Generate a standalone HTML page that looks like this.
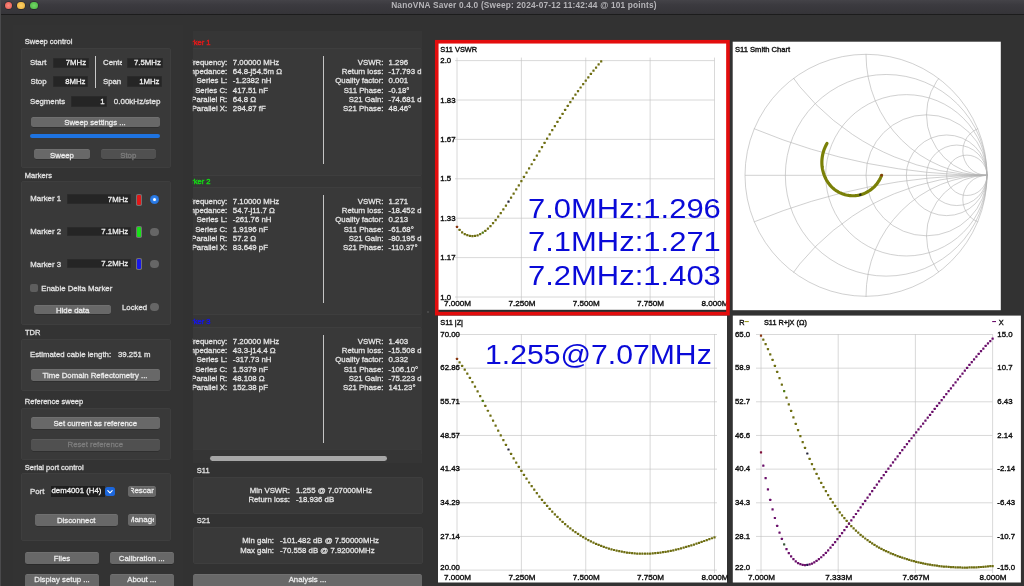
<!DOCTYPE html>
<html><head><meta charset="utf-8"><title>NanoVNA Saver</title>
<style>
html,body{margin:0;padding:0;overflow:hidden;}
body{width:1024px;height:586px;overflow:hidden;background:#323232;position:relative;
 font-family:"Liberation Sans",sans-serif;}
.t{position:absolute;white-space:nowrap;font-family:"Liberation Sans",sans-serif;-webkit-text-stroke:0.28px currentColor;}
.b{position:absolute;}
svg{position:absolute;left:0;top:0;}
svg text{stroke:#111;stroke-width:0.38px;}
.ui{position:absolute;left:0;top:0;width:1024px;height:586px;overflow:hidden;will-change:transform;}
</style></head><body><div class="ui">
<div class="b" style="left:0.00px;top:0.00px;width:1024.00px;height:14.00px;background:linear-gradient(#444348 0%,#3b3a3f 35%,#353438 100%);"></div>
<div class="b" style="left:0.00px;top:14.00px;width:1024.00px;height:0.80px;background:#1c1c1c;"></div>
<div class="b" style="left:4.90px;top:1.60px;width:7.60px;height:7.60px;background:radial-gradient(#fa8a80,#e4574c);border-radius:50%;box-shadow:0 0 0 0.7px rgba(0,0,0,.32);"></div>
<div class="b" style="left:17.45px;top:1.60px;width:7.60px;height:7.60px;background:radial-gradient(#fbd068,#e9ae38);border-radius:50%;box-shadow:0 0 0 0.7px rgba(0,0,0,.32);"></div>
<div class="b" style="left:30.00px;top:1.60px;width:7.60px;height:7.60px;background:radial-gradient(#74d868,#48b43e);border-radius:50%;box-shadow:0 0 0 0.7px rgba(0,0,0,.32);"></div>
<div class="t" style="top:0.02px;font-size:8.3px;line-height:10px;color:#b6b5b9;font-weight:bold;left:374.00px;width:300px;text-align:center;width:400px;left:324px;letter-spacing:0.19px;-webkit-text-stroke:0;">NanoVNA Saver 0.4.0 (Sweep: 2024-07-12 11:42:44 @ 101 points)</div>
<div class="b" style="left:0.00px;top:0.00px;width:1.20px;height:586.00px;background:#4a4a4c;"></div>
<div class="b" style="left:13.00px;top:25.00px;width:170.00px;height:561.00px;background:#333333;"></div>
<div class="b" style="left:192.80px;top:31.00px;width:229.20px;height:432.00px;background:#363636;"></div>
<div class="t" style="top:36.90px;font-size:7.5px;line-height:10px;color:#e4e4e4;left:24.80px;">Sweep control</div>
<div class="b" style="left:20.50px;top:47.80px;width:150.00px;height:120.20px;background:#393939;border-radius:3px;box-shadow:inset 0 0 0 0.5px rgba(255,255,255,.06);"></div>
<div class="t" style="top:58.20px;font-size:7.8px;line-height:10px;color:#e4e4e4;left:30.00px;">Start</div>
<div class="b" style="left:53.00px;top:57.50px;width:35.60px;height:10.50px;background:#252525;box-shadow:inset 0 0 0 0.5px rgba(255,255,255,.05);"></div>
<div class="t" style="top:58.20px;font-size:7.8px;line-height:10px;color:#f0f0f0;right:937.90px;text-align:right;">7MHz</div>
<div class="b" style="left:95.00px;top:56.00px;width:0.80px;height:31.50px;background:#c8c8c8;"></div>
<div class="b" style="left:103px;top:57px;width:18.5px;height:12px;overflow:hidden;">
<div class="t" style="left:0;top:1.20px;font-size:7.8px;line-height:10px;color:#e4e4e4;">Center</div></div>
<div class="b" style="left:127.00px;top:57.50px;width:36.30px;height:10.50px;background:#252525;box-shadow:inset 0 0 0 0.5px rgba(255,255,255,.05);"></div>
<div class="t" style="top:58.20px;font-size:7.8px;line-height:10px;color:#f0f0f0;right:863.20px;text-align:right;">7.5MHz</div>
<div class="t" style="top:77.30px;font-size:7.8px;line-height:10px;color:#e4e4e4;left:30.50px;">Stop</div>
<div class="b" style="left:53.00px;top:76.00px;width:35.00px;height:10.50px;background:#252525;box-shadow:inset 0 0 0 0.5px rgba(255,255,255,.05);"></div>
<div class="t" style="top:77.30px;font-size:7.8px;line-height:10px;color:#f0f0f0;right:938.50px;text-align:right;">8MHz</div>
<div class="t" style="top:77.30px;font-size:7.8px;line-height:10px;color:#e4e4e4;left:103.00px;">Span</div>
<div class="b" style="left:127.00px;top:76.00px;width:35.00px;height:10.50px;background:#252525;box-shadow:inset 0 0 0 0.5px rgba(255,255,255,.05);"></div>
<div class="t" style="top:77.30px;font-size:7.8px;line-height:10px;color:#f0f0f0;right:864.50px;text-align:right;">1MHz</div>
<div class="t" style="top:97.40px;font-size:7.8px;line-height:10px;color:#e4e4e4;left:30.00px;">Segments</div>
<div class="b" style="left:71.00px;top:96.30px;width:36.00px;height:10.50px;background:#252525;box-shadow:inset 0 0 0 0.5px rgba(255,255,255,.05);"></div>
<div class="t" style="top:97.40px;font-size:7.8px;line-height:10px;color:#f0f0f0;right:919.50px;text-align:right;">1</div>
<div class="t" style="top:97.33px;font-size:8.0px;line-height:10px;color:#e4e4e4;left:113.80px;">0.00kHz/step</div>
<div class="b" style="left:30.50px;top:117.00px;width:129.00px;height:9.50px;background:#686868;border-radius:2.5px;box-shadow:0 0.5px 0 rgba(0,0,0,.35), inset 0 0.5px 0 rgba(255,255,255,.12);"></div>
<div class="t" style="top:118.00px;font-size:7.8px;line-height:10px;color:#ececec;left:-55.00px;width:300px;text-align:center;">Sweep settings ...</div>
<div class="b" style="left:30.00px;top:133.50px;width:130.00px;height:4.30px;background:#1e73e0;border-radius:2px;"></div>
<div class="b" style="left:34.00px;top:149.00px;width:56.00px;height:10.00px;background:#686868;border-radius:2.5px;box-shadow:0 0.5px 0 rgba(0,0,0,.35), inset 0 0.5px 0 rgba(255,255,255,.12);"></div>
<div class="t" style="top:150.50px;font-size:7.8px;line-height:10px;color:#ececec;left:-88.00px;width:300px;text-align:center;">Sweep</div>
<div class="b" style="left:100.50px;top:149.00px;width:55.50px;height:10.00px;background:#505050;border-radius:2.5px;box-shadow:0 0.5px 0 rgba(0,0,0,.35), inset 0 0.5px 0 rgba(255,255,255,.12);"></div>
<div class="t" style="top:150.50px;font-size:7.8px;line-height:10px;color:#7e7e7e;left:-21.75px;width:300px;text-align:center;">Stop</div>
<div class="t" style="top:171.40px;font-size:7.5px;line-height:10px;color:#e4e4e4;left:24.80px;">Markers</div>
<div class="b" style="left:20.50px;top:181.30px;width:150.00px;height:143.70px;background:#393939;border-radius:3px;box-shadow:inset 0 0 0 0.5px rgba(255,255,255,.06);"></div>
<div class="t" style="top:194.30px;font-size:7.8px;line-height:10px;color:#e4e4e4;left:30.30px;">Marker 1</div>
<div class="b" style="left:67.00px;top:194.30px;width:63.70px;height:9.40px;background:#252525;box-shadow:inset 0 0 0 0.5px rgba(255,255,255,.05);"></div>
<div class="t" style="top:194.70px;font-size:7.8px;line-height:10px;color:#f0f0f0;right:895.80px;text-align:right;">7MHz</div>
<div class="b" style="left:135.70px;top:193.50px;width:6.60px;height:12.40px;background:#727272;border-radius:1.8px;"></div>
<div class="b" style="left:137.30px;top:195.00px;width:3.40px;height:9.60px;background:#e01818;border-radius:1.2px;"></div>
<div class="b" style="left:150.10px;top:195.20px;width:9.00px;height:9.00px;background:radial-gradient(#3b8cf5,#1a67d2);border-radius:50%;"></div>
<div class="b" style="left:153.00px;top:198.10px;width:3.20px;height:3.20px;background:#ffffff;border-radius:50%;"></div>
<div class="t" style="top:227.00px;font-size:7.8px;line-height:10px;color:#e4e4e4;left:30.30px;">Marker 2</div>
<div class="b" style="left:67.00px;top:226.60px;width:63.70px;height:9.40px;background:#252525;box-shadow:inset 0 0 0 0.5px rgba(255,255,255,.05);"></div>
<div class="t" style="top:227.00px;font-size:7.8px;line-height:10px;color:#f0f0f0;right:895.80px;text-align:right;">7.1MHz</div>
<div class="b" style="left:135.70px;top:225.80px;width:6.60px;height:12.40px;background:#727272;border-radius:1.8px;"></div>
<div class="b" style="left:137.30px;top:227.30px;width:3.40px;height:9.60px;background:#18e018;border-radius:1.2px;"></div>
<div class="b" style="left:150.40px;top:227.90px;width:8.40px;height:8.40px;background:#666666;border-radius:50%;"></div>
<div class="t" style="top:259.50px;font-size:7.8px;line-height:10px;color:#e4e4e4;left:30.30px;">Marker 3</div>
<div class="b" style="left:67.00px;top:258.60px;width:63.70px;height:9.40px;background:#252525;box-shadow:inset 0 0 0 0.5px rgba(255,255,255,.05);"></div>
<div class="t" style="top:259.00px;font-size:7.8px;line-height:10px;color:#f0f0f0;right:895.80px;text-align:right;">7.2MHz</div>
<div class="b" style="left:135.70px;top:257.80px;width:6.60px;height:12.40px;background:#727272;border-radius:1.8px;"></div>
<div class="b" style="left:137.30px;top:259.30px;width:3.40px;height:9.60px;background:#1818e8;border-radius:1.2px;"></div>
<div class="b" style="left:150.40px;top:259.90px;width:8.40px;height:8.40px;background:#666666;border-radius:50%;"></div>
<div class="b" style="left:30.00px;top:284.00px;width:8.00px;height:8.00px;background:#5e5e5e;border-radius:2px;"></div>
<div class="t" style="top:284.00px;font-size:7.8px;line-height:10px;color:#e4e4e4;left:41.20px;">Enable Delta Marker</div>
<div class="b" style="left:34.00px;top:304.50px;width:77.30px;height:9.80px;background:#686868;border-radius:2.5px;box-shadow:0 0.5px 0 rgba(0,0,0,.35), inset 0 0.5px 0 rgba(255,255,255,.12);"></div>
<div class="t" style="top:305.60px;font-size:7.8px;line-height:10px;color:#ececec;left:-77.35px;width:300px;text-align:center;">Hide data</div>
<div class="t" style="top:302.60px;font-size:7.8px;line-height:10px;color:#e4e4e4;left:122.00px;">Locked</div>
<div class="b" style="left:150.40px;top:302.80px;width:8.40px;height:8.40px;background:#666666;border-radius:50%;"></div>
<div class="t" style="top:327.80px;font-size:7.5px;line-height:10px;color:#e4e4e4;left:25.00px;">TDR</div>
<div class="b" style="left:20.50px;top:339.00px;width:150.00px;height:52.00px;background:#393939;border-radius:3px;box-shadow:inset 0 0 0 0.5px rgba(255,255,255,.06);"></div>
<div class="t" style="top:350.00px;font-size:7.8px;line-height:10px;color:#e4e4e4;left:30.00px;">Estimated cable length:</div>
<div class="t" style="top:350.00px;font-size:7.8px;line-height:10px;color:#e4e4e4;left:118.00px;">39.251 m</div>
<div class="b" style="left:30.50px;top:369.30px;width:129.00px;height:12.00px;background:#686868;border-radius:2.5px;box-shadow:0 0.5px 0 rgba(0,0,0,.35), inset 0 0.5px 0 rgba(255,255,255,.12);"></div>
<div class="t" style="top:370.50px;font-size:7.8px;line-height:10px;color:#ececec;left:-55.00px;width:300px;text-align:center;">Time Domain Reflectometry ...</div>
<div class="t" style="top:397.20px;font-size:7.5px;line-height:10px;color:#e4e4e4;left:24.80px;">Reference sweep</div>
<div class="b" style="left:20.50px;top:408.00px;width:150.00px;height:52.00px;background:#393939;border-radius:3px;box-shadow:inset 0 0 0 0.5px rgba(255,255,255,.06);"></div>
<div class="b" style="left:30.50px;top:417.00px;width:129.50px;height:12.30px;background:#686868;border-radius:2.5px;box-shadow:0 0.5px 0 rgba(0,0,0,.35), inset 0 0.5px 0 rgba(255,255,255,.12);"></div>
<div class="t" style="top:419.20px;font-size:7.8px;line-height:10px;color:#ececec;left:-54.75px;width:300px;text-align:center;">Set current as reference</div>
<div class="b" style="left:30.50px;top:439.00px;width:129.50px;height:11.60px;background:#505050;border-radius:2.5px;box-shadow:0 0.5px 0 rgba(0,0,0,.35), inset 0 0.5px 0 rgba(255,255,255,.12);"></div>
<div class="t" style="top:440.00px;font-size:7.8px;line-height:10px;color:#7e7e7e;left:-54.75px;width:300px;text-align:center;">Reset reference</div>
<div class="t" style="top:462.90px;font-size:7.5px;line-height:10px;color:#e4e4e4;left:24.80px;">Serial port control</div>
<div class="b" style="left:20.50px;top:473.00px;width:150.00px;height:68.00px;background:#393939;border-radius:3px;box-shadow:inset 0 0 0 0.5px rgba(255,255,255,.06);"></div>
<div class="t" style="top:486.60px;font-size:7.8px;line-height:10px;color:#e4e4e4;left:30.00px;">Port</div>
<div class="b" style="left:51.00px;top:485.50px;width:54.00px;height:11.50px;background:#1f1f1f;"></div>
<div class="b" style="left:51px;top:485.5px;width:54px;height:11.5px;overflow:hidden;">
<div class="t" style="left:0.5px;top:0.30px;font-size:7.8px;line-height:10px;color:#f2f2f2;">dem4001 (H4)</div></div>
<div class="b" style="left:105.00px;top:486.50px;width:10.00px;height:9.80px;background:#1b66dc;border-radius:2.5px;"></div>
<svg width="1024" height="586" style="pointer-events:none"><path d="M107.8 490.6 L110 492.8 L112.2 490.6" fill="none" stroke="#fff" stroke-width="1.1" stroke-linecap="round" stroke-linejoin="round"/></svg>
<div class="b" style="left:128.00px;top:485.70px;width:28.40px;height:11.30px;background:#686868;border-radius:2.5px;box-shadow:0 0.5px 0 rgba(0,0,0,.35), inset 0 0.5px 0 rgba(255,255,255,.12);"></div>
<div class="b" style="left:130.80px;top:485.70px;width:22.80px;height:11.30px;overflow:hidden;"><div class="t" style="left:-4.60px;width:32px;text-align:center;top:0.78px;font-size:8.0px;line-height:10px;color:#ececec;">Rescan</div></div>
<div class="b" style="left:34.50px;top:514.20px;width:83.50px;height:12.30px;background:#686868;border-radius:2.5px;box-shadow:0 0.5px 0 rgba(0,0,0,.35), inset 0 0.5px 0 rgba(255,255,255,.12);"></div>
<div class="t" style="top:515.55px;font-size:7.8px;line-height:10px;color:#ececec;left:-73.75px;width:300px;text-align:center;">Disconnect</div>
<div class="b" style="left:128.00px;top:514.20px;width:28.40px;height:12.30px;background:#686868;border-radius:2.5px;box-shadow:0 0.5px 0 rgba(0,0,0,.35), inset 0 0.5px 0 rgba(255,255,255,.12);"></div>
<div class="b" style="left:130.80px;top:514.20px;width:22.80px;height:12.30px;overflow:hidden;"><div class="t" style="left:-6.60px;width:36px;text-align:center;top:1.28px;font-size:8.0px;line-height:10px;color:#ececec;">Manage</div></div>
<div class="b" style="left:25.00px;top:552.30px;width:74.00px;height:12.20px;background:#686868;border-radius:2.5px;box-shadow:0 0.5px 0 rgba(0,0,0,.35), inset 0 0.5px 0 rgba(255,255,255,.12);"></div>
<div class="t" style="top:553.60px;font-size:7.8px;line-height:10px;color:#ececec;left:-88.00px;width:300px;text-align:center;">Files</div>
<div class="b" style="left:109.60px;top:552.30px;width:64.40px;height:12.20px;background:#686868;border-radius:2.5px;box-shadow:0 0.5px 0 rgba(0,0,0,.35), inset 0 0.5px 0 rgba(255,255,255,.12);"></div>
<div class="t" style="top:553.60px;font-size:7.8px;line-height:10px;color:#ececec;left:-8.20px;width:300px;text-align:center;">Calibration ...</div>
<div class="b" style="left:25.00px;top:573.50px;width:74.00px;height:16.50px;background:#686868;border-radius:2.5px;box-shadow:0 0.5px 0 rgba(0,0,0,.35), inset 0 0.5px 0 rgba(255,255,255,.12);"></div>
<div class="t" style="top:574.90px;font-size:7.8px;line-height:10px;color:#ececec;left:-88.00px;width:300px;text-align:center;">Display setup ...</div>
<div class="b" style="left:109.60px;top:573.50px;width:64.40px;height:16.50px;background:#686868;border-radius:2.5px;box-shadow:0 0.5px 0 rgba(0,0,0,.35), inset 0 0.5px 0 rgba(255,255,255,.12);"></div>
<div class="t" style="top:574.90px;font-size:7.8px;line-height:10px;color:#ececec;left:-8.20px;width:300px;text-align:center;">About ...</div>
<div class="b" style="left:0;top:0;width:1024px;height:586px;clip-path:inset(25px 602.5px 121px 192.8px);">
<div class="b" style="left:192.00px;top:47.80px;width:229.50px;height:128.50px;background:#393939;border-radius:3px;box-shadow:inset 0 0 0 0.5px rgba(255,255,255,.06);"></div>
<div class="t" style="top:37.77px;font-size:7.6px;line-height:10px;color:#e01a1a;left:180.60px;-webkit-text-stroke:0.45px currentColor;">Marker 1</div>
<div class="t" style="top:57.60px;font-size:7.8px;line-height:10px;color:#e4e4e4;right:796.80px;text-align:right;">Frequency:</div>
<div class="t" style="top:57.60px;font-size:7.8px;line-height:10px;color:#e4e4e4;left:232.80px;">7.00000 MHz</div>
<div class="t" style="top:57.60px;font-size:7.8px;line-height:10px;color:#e4e4e4;right:640.60px;text-align:right;">VSWR:</div>
<div class="t" style="top:57.60px;font-size:7.8px;line-height:10px;color:#e4e4e4;left:388.60px;">1.296</div>
<div class="t" style="top:66.93px;font-size:7.8px;line-height:10px;color:#e4e4e4;right:796.80px;text-align:right;">Impedance:</div>
<div class="t" style="top:66.93px;font-size:7.8px;line-height:10px;color:#e4e4e4;left:232.80px;">64.8-j54.5m Ω</div>
<div class="t" style="top:66.93px;font-size:7.8px;line-height:10px;color:#e4e4e4;right:640.60px;text-align:right;">Return loss:</div>
<div class="t" style="top:66.93px;font-size:7.8px;line-height:10px;color:#e4e4e4;left:388.60px;">-17.793 dB</div>
<div class="t" style="top:76.26px;font-size:7.8px;line-height:10px;color:#e4e4e4;right:796.80px;text-align:right;">Series L:</div>
<div class="t" style="top:76.26px;font-size:7.8px;line-height:10px;color:#e4e4e4;left:232.80px;">-1.2382 nH</div>
<div class="t" style="top:76.26px;font-size:7.8px;line-height:10px;color:#e4e4e4;right:640.60px;text-align:right;">Quality factor:</div>
<div class="t" style="top:76.26px;font-size:7.8px;line-height:10px;color:#e4e4e4;left:388.60px;">0.001</div>
<div class="t" style="top:85.59px;font-size:7.8px;line-height:10px;color:#e4e4e4;right:796.80px;text-align:right;">Series C:</div>
<div class="t" style="top:85.59px;font-size:7.8px;line-height:10px;color:#e4e4e4;left:232.80px;">417.51 nF</div>
<div class="t" style="top:85.59px;font-size:7.8px;line-height:10px;color:#e4e4e4;right:640.60px;text-align:right;">S11 Phase:</div>
<div class="t" style="top:85.59px;font-size:7.8px;line-height:10px;color:#e4e4e4;left:388.60px;">-0.18°</div>
<div class="t" style="top:94.92px;font-size:7.8px;line-height:10px;color:#e4e4e4;right:796.80px;text-align:right;">Parallel R:</div>
<div class="t" style="top:94.92px;font-size:7.8px;line-height:10px;color:#e4e4e4;left:232.80px;">64.8 Ω</div>
<div class="t" style="top:94.92px;font-size:7.8px;line-height:10px;color:#e4e4e4;right:640.60px;text-align:right;">S21 Gain:</div>
<div class="t" style="top:94.92px;font-size:7.8px;line-height:10px;color:#e4e4e4;left:388.60px;">-74.681 dB</div>
<div class="t" style="top:104.25px;font-size:7.8px;line-height:10px;color:#e4e4e4;right:796.80px;text-align:right;">Parallel X:</div>
<div class="t" style="top:104.25px;font-size:7.8px;line-height:10px;color:#e4e4e4;left:232.80px;">294.87 fF</div>
<div class="t" style="top:104.25px;font-size:7.8px;line-height:10px;color:#e4e4e4;right:640.60px;text-align:right;">S21 Phase:</div>
<div class="t" style="top:104.25px;font-size:7.8px;line-height:10px;color:#e4e4e4;left:388.60px;">48.46°</div>
<div class="b" style="left:322.70px;top:56.00px;width:0.80px;height:108.00px;background:#c4c4c4;"></div>
<div class="b" style="left:192.00px;top:186.80px;width:229.50px;height:128.50px;background:#393939;border-radius:3px;box-shadow:inset 0 0 0 0.5px rgba(255,255,255,.06);"></div>
<div class="t" style="top:176.77px;font-size:7.6px;line-height:10px;color:#16d416;left:180.60px;-webkit-text-stroke:0.45px currentColor;">Marker 2</div>
<div class="t" style="top:196.60px;font-size:7.8px;line-height:10px;color:#e4e4e4;right:796.80px;text-align:right;">Frequency:</div>
<div class="t" style="top:196.60px;font-size:7.8px;line-height:10px;color:#e4e4e4;left:232.80px;">7.10000 MHz</div>
<div class="t" style="top:196.60px;font-size:7.8px;line-height:10px;color:#e4e4e4;right:640.60px;text-align:right;">VSWR:</div>
<div class="t" style="top:196.60px;font-size:7.8px;line-height:10px;color:#e4e4e4;left:388.60px;">1.271</div>
<div class="t" style="top:205.93px;font-size:7.8px;line-height:10px;color:#e4e4e4;right:796.80px;text-align:right;">Impedance:</div>
<div class="t" style="top:205.93px;font-size:7.8px;line-height:10px;color:#e4e4e4;left:232.80px;">54.7-j11.7 Ω</div>
<div class="t" style="top:205.93px;font-size:7.8px;line-height:10px;color:#e4e4e4;right:640.60px;text-align:right;">Return loss:</div>
<div class="t" style="top:205.93px;font-size:7.8px;line-height:10px;color:#e4e4e4;left:388.60px;">-18.452 dB</div>
<div class="t" style="top:215.26px;font-size:7.8px;line-height:10px;color:#e4e4e4;right:796.80px;text-align:right;">Series L:</div>
<div class="t" style="top:215.26px;font-size:7.8px;line-height:10px;color:#e4e4e4;left:232.80px;">-261.76 nH</div>
<div class="t" style="top:215.26px;font-size:7.8px;line-height:10px;color:#e4e4e4;right:640.60px;text-align:right;">Quality factor:</div>
<div class="t" style="top:215.26px;font-size:7.8px;line-height:10px;color:#e4e4e4;left:388.60px;">0.213</div>
<div class="t" style="top:224.59px;font-size:7.8px;line-height:10px;color:#e4e4e4;right:796.80px;text-align:right;">Series C:</div>
<div class="t" style="top:224.59px;font-size:7.8px;line-height:10px;color:#e4e4e4;left:232.80px;">1.9196 nF</div>
<div class="t" style="top:224.59px;font-size:7.8px;line-height:10px;color:#e4e4e4;right:640.60px;text-align:right;">S11 Phase:</div>
<div class="t" style="top:224.59px;font-size:7.8px;line-height:10px;color:#e4e4e4;left:388.60px;">-61.68°</div>
<div class="t" style="top:233.92px;font-size:7.8px;line-height:10px;color:#e4e4e4;right:796.80px;text-align:right;">Parallel R:</div>
<div class="t" style="top:233.92px;font-size:7.8px;line-height:10px;color:#e4e4e4;left:232.80px;">57.2 Ω</div>
<div class="t" style="top:233.92px;font-size:7.8px;line-height:10px;color:#e4e4e4;right:640.60px;text-align:right;">S21 Gain:</div>
<div class="t" style="top:233.92px;font-size:7.8px;line-height:10px;color:#e4e4e4;left:388.60px;">-80.195 dB</div>
<div class="t" style="top:243.25px;font-size:7.8px;line-height:10px;color:#e4e4e4;right:796.80px;text-align:right;">Parallel X:</div>
<div class="t" style="top:243.25px;font-size:7.8px;line-height:10px;color:#e4e4e4;left:232.80px;">83.649 pF</div>
<div class="t" style="top:243.25px;font-size:7.8px;line-height:10px;color:#e4e4e4;right:640.60px;text-align:right;">S21 Phase:</div>
<div class="t" style="top:243.25px;font-size:7.8px;line-height:10px;color:#e4e4e4;left:388.60px;">-110.37°</div>
<div class="b" style="left:322.70px;top:195.00px;width:0.80px;height:108.00px;background:#c4c4c4;"></div>
<div class="b" style="left:192.00px;top:326.80px;width:229.50px;height:128.50px;background:#393939;border-radius:3px;box-shadow:inset 0 0 0 0.5px rgba(255,255,255,.06);"></div>
<div class="t" style="top:316.77px;font-size:7.6px;line-height:10px;color:#1414e6;left:180.60px;-webkit-text-stroke:0.45px currentColor;">Marker 3</div>
<div class="t" style="top:336.60px;font-size:7.8px;line-height:10px;color:#e4e4e4;right:796.80px;text-align:right;">Frequency:</div>
<div class="t" style="top:336.60px;font-size:7.8px;line-height:10px;color:#e4e4e4;left:232.80px;">7.20000 MHz</div>
<div class="t" style="top:336.60px;font-size:7.8px;line-height:10px;color:#e4e4e4;right:640.60px;text-align:right;">VSWR:</div>
<div class="t" style="top:336.60px;font-size:7.8px;line-height:10px;color:#e4e4e4;left:388.60px;">1.403</div>
<div class="t" style="top:345.93px;font-size:7.8px;line-height:10px;color:#e4e4e4;right:796.80px;text-align:right;">Impedance:</div>
<div class="t" style="top:345.93px;font-size:7.8px;line-height:10px;color:#e4e4e4;left:232.80px;">43.3-j14.4 Ω</div>
<div class="t" style="top:345.93px;font-size:7.8px;line-height:10px;color:#e4e4e4;right:640.60px;text-align:right;">Return loss:</div>
<div class="t" style="top:345.93px;font-size:7.8px;line-height:10px;color:#e4e4e4;left:388.60px;">-15.508 dB</div>
<div class="t" style="top:355.26px;font-size:7.8px;line-height:10px;color:#e4e4e4;right:796.80px;text-align:right;">Series L:</div>
<div class="t" style="top:355.26px;font-size:7.8px;line-height:10px;color:#e4e4e4;left:232.80px;">-317.73 nH</div>
<div class="t" style="top:355.26px;font-size:7.8px;line-height:10px;color:#e4e4e4;right:640.60px;text-align:right;">Quality factor:</div>
<div class="t" style="top:355.26px;font-size:7.8px;line-height:10px;color:#e4e4e4;left:388.60px;">0.332</div>
<div class="t" style="top:364.59px;font-size:7.8px;line-height:10px;color:#e4e4e4;right:796.80px;text-align:right;">Series C:</div>
<div class="t" style="top:364.59px;font-size:7.8px;line-height:10px;color:#e4e4e4;left:232.80px;">1.5379 nF</div>
<div class="t" style="top:364.59px;font-size:7.8px;line-height:10px;color:#e4e4e4;right:640.60px;text-align:right;">S11 Phase:</div>
<div class="t" style="top:364.59px;font-size:7.8px;line-height:10px;color:#e4e4e4;left:388.60px;">-106.10°</div>
<div class="t" style="top:373.92px;font-size:7.8px;line-height:10px;color:#e4e4e4;right:796.80px;text-align:right;">Parallel R:</div>
<div class="t" style="top:373.92px;font-size:7.8px;line-height:10px;color:#e4e4e4;left:232.80px;">48.108 Ω</div>
<div class="t" style="top:373.92px;font-size:7.8px;line-height:10px;color:#e4e4e4;right:640.60px;text-align:right;">S21 Gain:</div>
<div class="t" style="top:373.92px;font-size:7.8px;line-height:10px;color:#e4e4e4;left:388.60px;">-75.223 dB</div>
<div class="t" style="top:383.25px;font-size:7.8px;line-height:10px;color:#e4e4e4;right:796.80px;text-align:right;">Parallel X:</div>
<div class="t" style="top:383.25px;font-size:7.8px;line-height:10px;color:#e4e4e4;left:232.80px;">152.38 pF</div>
<div class="t" style="top:383.25px;font-size:7.8px;line-height:10px;color:#e4e4e4;right:640.60px;text-align:right;">S21 Phase:</div>
<div class="t" style="top:383.25px;font-size:7.8px;line-height:10px;color:#e4e4e4;left:388.60px;">141.23°</div>
<div class="b" style="left:322.70px;top:335.00px;width:0.80px;height:108.00px;background:#c4c4c4;"></div>
</div>
<div class="b" style="left:192.80px;top:448.50px;width:228.70px;height:14.80px;background:#353535;box-shadow:inset 0 0.5px 0 rgba(255,255,255,.06);"></div>
<div class="b" style="left:209.50px;top:455.90px;width:177.00px;height:4.80px;background:#a6a6a6;border-radius:2.4px;"></div>
<div class="t" style="top:465.80px;font-size:7.5px;line-height:10px;color:#e4e4e4;left:196.80px;">S11</div>
<div class="b" style="left:192.50px;top:476.80px;width:230.00px;height:37.50px;background:#393939;border-radius:3px;box-shadow:inset 0 0 0 0.5px rgba(255,255,255,.06);"></div>
<div class="t" style="top:485.70px;font-size:7.8px;line-height:10px;color:#e4e4e4;right:734.00px;text-align:right;">Min VSWR:</div>
<div class="t" style="top:485.70px;font-size:7.8px;line-height:10px;color:#e4e4e4;left:296.00px;">1.255 @ 7.07000MHz</div>
<div class="t" style="top:495.10px;font-size:7.8px;line-height:10px;color:#e4e4e4;right:734.00px;text-align:right;">Return loss:</div>
<div class="t" style="top:495.10px;font-size:7.8px;line-height:10px;color:#e4e4e4;left:296.00px;">-18.936 dB</div>
<div class="t" style="top:516.10px;font-size:7.5px;line-height:10px;color:#e4e4e4;left:196.80px;">S21</div>
<div class="b" style="left:192.50px;top:527.00px;width:230.00px;height:37.30px;background:#393939;border-radius:3px;box-shadow:inset 0 0 0 0.5px rgba(255,255,255,.06);"></div>
<div class="t" style="top:536.20px;font-size:7.8px;line-height:10px;color:#e4e4e4;right:750.00px;text-align:right;">Min gain:</div>
<div class="t" style="top:536.20px;font-size:7.8px;line-height:10px;color:#e4e4e4;left:280.00px;">-101.482 dB @ 7.50000MHz</div>
<div class="t" style="top:545.50px;font-size:7.8px;line-height:10px;color:#e4e4e4;right:750.00px;text-align:right;">Max gain:</div>
<div class="t" style="top:545.50px;font-size:7.8px;line-height:10px;color:#e4e4e4;left:280.00px;">-70.558 dB @ 7.92000MHz</div>
<div class="b" style="left:193.00px;top:573.80px;width:229.00px;height:16.20px;background:#686868;border-radius:2.5px;box-shadow:0 0.5px 0 rgba(0,0,0,.35), inset 0 0.5px 0 rgba(255,255,255,.12);"></div>
<div class="t" style="top:574.70px;font-size:7.8px;line-height:10px;color:#ececec;left:157.50px;width:300px;text-align:center;">Analysis ...</div>
<div class="b" style="left:427.00px;top:311.30px;width:2.00px;height:2.00px;background:#505050;border-radius:50%;"></div>
<svg width="1024" height="586" viewBox="0 0 1024 586" font-family="Liberation Sans, sans-serif">
<rect x="438" y="41.7" width="289" height="268.3" fill="#fff"/>
<line x1="455.00" y1="60.60" x2="714.50" y2="60.60" stroke="#c4c4c4" stroke-width="0.65"/>
<line x1="455.00" y1="100.00" x2="714.50" y2="100.00" stroke="#c4c4c4" stroke-width="0.65"/>
<line x1="455.00" y1="139.40" x2="714.50" y2="139.40" stroke="#c4c4c4" stroke-width="0.65"/>
<line x1="455.00" y1="178.80" x2="714.50" y2="178.80" stroke="#c4c4c4" stroke-width="0.65"/>
<line x1="455.00" y1="218.20" x2="714.50" y2="218.20" stroke="#c4c4c4" stroke-width="0.65"/>
<line x1="455.00" y1="257.60" x2="714.50" y2="257.60" stroke="#c4c4c4" stroke-width="0.65"/>
<line x1="455.00" y1="297.00" x2="714.50" y2="297.00" stroke="#c4c4c4" stroke-width="0.65"/>
<line x1="457.00" y1="57.60" x2="457.00" y2="300.00" stroke="#c4c4c4" stroke-width="0.65"/>
<line x1="521.38" y1="57.60" x2="521.38" y2="300.00" stroke="#c4c4c4" stroke-width="0.65"/>
<line x1="585.75" y1="57.60" x2="585.75" y2="300.00" stroke="#c4c4c4" stroke-width="0.65"/>
<line x1="650.12" y1="57.60" x2="650.12" y2="300.00" stroke="#c4c4c4" stroke-width="0.65"/>
<line x1="714.50" y1="57.60" x2="714.50" y2="300.00" stroke="#c4c4c4" stroke-width="0.65"/>
<text x="440.30" y="51.60" font-size="7.4" fill="#111" text-anchor="start">S11 VSWR</text>
<text x="440.30" y="63.20" font-size="7.8" fill="#111" text-anchor="start">2.0</text>
<text x="440.30" y="102.60" font-size="7.8" fill="#111" text-anchor="start">1.83</text>
<text x="440.30" y="142.00" font-size="7.8" fill="#111" text-anchor="start">1.67</text>
<text x="440.30" y="181.40" font-size="7.8" fill="#111" text-anchor="start">1.5</text>
<text x="440.30" y="220.80" font-size="7.8" fill="#111" text-anchor="start">1.33</text>
<text x="440.30" y="260.20" font-size="7.8" fill="#111" text-anchor="start">1.17</text>
<text x="440.30" y="299.60" font-size="7.8" fill="#111" text-anchor="start">1.0</text>
<text x="444.00" y="306.00" font-size="8.1" fill="#111" text-anchor="start">7.000M</text>
<text x="508.38" y="306.00" font-size="8.1" fill="#111" text-anchor="start">7.250M</text>
<text x="572.75" y="306.00" font-size="8.1" fill="#111" text-anchor="start">7.500M</text>
<text x="637.12" y="306.00" font-size="8.1" fill="#111" text-anchor="start">7.750M</text>
<text x="701.50" y="306.00" font-size="8.1" fill="#111" text-anchor="start">8.000M</text>
<clipPath id="cv"><rect x="438" y="41.7" width="289" height="268.3"/></clipPath>
<g clip-path="url(#cv)">
<rect x="455.88" y="225.85" width="2.24" height="2.24" rx="0.5" fill="#8a3a14"/>
<rect x="458.45" y="228.82" width="2.24" height="2.24" rx="0.5" fill="#6e6e12"/>
<rect x="461.03" y="231.15" width="2.24" height="2.24" rx="0.5" fill="#6e6e12"/>
<rect x="463.61" y="232.90" width="2.24" height="2.24" rx="0.5" fill="#6e6e12"/>
<rect x="466.18" y="234.11" width="2.24" height="2.24" rx="0.5" fill="#6e6e12"/>
<rect x="468.75" y="234.81" width="2.24" height="2.24" rx="0.5" fill="#6e6e12"/>
<rect x="471.33" y="235.04" width="2.24" height="2.24" rx="0.5" fill="#6e6e12"/>
<rect x="473.90" y="234.80" width="2.24" height="2.24" rx="0.5" fill="#6e6e12"/>
<rect x="476.48" y="234.14" width="2.24" height="2.24" rx="0.5" fill="#6e6e12"/>
<rect x="479.06" y="233.05" width="2.24" height="2.24" rx="0.5" fill="#6e6e12"/>
<rect x="481.63" y="231.57" width="2.24" height="2.24" rx="0.5" fill="#4e7a14"/>
<rect x="484.20" y="229.71" width="2.24" height="2.24" rx="0.5" fill="#6e6e12"/>
<rect x="486.78" y="227.49" width="2.24" height="2.24" rx="0.5" fill="#6e6e12"/>
<rect x="489.36" y="224.94" width="2.24" height="2.24" rx="0.5" fill="#6e6e12"/>
<rect x="491.93" y="222.08" width="2.24" height="2.24" rx="0.5" fill="#6e6e12"/>
<rect x="494.50" y="218.96" width="2.24" height="2.24" rx="0.5" fill="#6e6e12"/>
<rect x="497.08" y="215.60" width="2.24" height="2.24" rx="0.5" fill="#6e6e12"/>
<rect x="499.65" y="212.04" width="2.24" height="2.24" rx="0.5" fill="#6e6e12"/>
<rect x="502.23" y="208.33" width="2.24" height="2.24" rx="0.5" fill="#6e6e12"/>
<rect x="504.81" y="204.48" width="2.24" height="2.24" rx="0.5" fill="#6e6e12"/>
<rect x="507.38" y="200.54" width="2.24" height="2.24" rx="0.5" fill="#26263a"/>
<rect x="509.95" y="196.52" width="2.24" height="2.24" rx="0.5" fill="#6e6e12"/>
<rect x="512.53" y="192.44" width="2.24" height="2.24" rx="0.5" fill="#6e6e12"/>
<rect x="515.11" y="188.32" width="2.24" height="2.24" rx="0.5" fill="#6e6e12"/>
<rect x="517.68" y="184.17" width="2.24" height="2.24" rx="0.5" fill="#6e6e12"/>
<rect x="520.25" y="180.00" width="2.24" height="2.24" rx="0.5" fill="#6e6e12"/>
<rect x="522.83" y="175.81" width="2.24" height="2.24" rx="0.5" fill="#6e6e12"/>
<rect x="525.40" y="171.60" width="2.24" height="2.24" rx="0.5" fill="#6e6e12"/>
<rect x="527.98" y="167.37" width="2.24" height="2.24" rx="0.5" fill="#6e6e12"/>
<rect x="530.55" y="163.13" width="2.24" height="2.24" rx="0.5" fill="#6e6e12"/>
<rect x="533.13" y="158.87" width="2.24" height="2.24" rx="0.5" fill="#6e6e12"/>
<rect x="535.71" y="154.60" width="2.24" height="2.24" rx="0.5" fill="#6e6e12"/>
<rect x="538.28" y="150.33" width="2.24" height="2.24" rx="0.5" fill="#6e6e12"/>
<rect x="540.86" y="146.06" width="2.24" height="2.24" rx="0.5" fill="#6e6e12"/>
<rect x="543.43" y="141.79" width="2.24" height="2.24" rx="0.5" fill="#6e6e12"/>
<rect x="546.00" y="137.54" width="2.24" height="2.24" rx="0.5" fill="#6e6e12"/>
<rect x="548.58" y="133.30" width="2.24" height="2.24" rx="0.5" fill="#6e6e12"/>
<rect x="551.15" y="129.10" width="2.24" height="2.24" rx="0.5" fill="#6e6e12"/>
<rect x="553.73" y="124.93" width="2.24" height="2.24" rx="0.5" fill="#6e6e12"/>
<rect x="556.30" y="120.80" width="2.24" height="2.24" rx="0.5" fill="#6e6e12"/>
<rect x="558.88" y="116.72" width="2.24" height="2.24" rx="0.5" fill="#6e6e12"/>
<rect x="561.46" y="112.69" width="2.24" height="2.24" rx="0.5" fill="#6e6e12"/>
<rect x="564.03" y="108.73" width="2.24" height="2.24" rx="0.5" fill="#6e6e12"/>
<rect x="566.61" y="104.83" width="2.24" height="2.24" rx="0.5" fill="#6e6e12"/>
<rect x="569.18" y="100.99" width="2.24" height="2.24" rx="0.5" fill="#6e6e12"/>
<rect x="571.75" y="97.23" width="2.24" height="2.24" rx="0.5" fill="#6e6e12"/>
<rect x="574.33" y="93.55" width="2.24" height="2.24" rx="0.5" fill="#6e6e12"/>
<rect x="576.90" y="89.93" width="2.24" height="2.24" rx="0.5" fill="#6e6e12"/>
<rect x="579.48" y="86.38" width="2.24" height="2.24" rx="0.5" fill="#6e6e12"/>
<rect x="582.05" y="82.91" width="2.24" height="2.24" rx="0.5" fill="#6e6e12"/>
<rect x="584.63" y="79.49" width="2.24" height="2.24" rx="0.5" fill="#6e6e12"/>
<rect x="587.21" y="76.14" width="2.24" height="2.24" rx="0.5" fill="#6e6e12"/>
<rect x="589.78" y="72.84" width="2.24" height="2.24" rx="0.5" fill="#6e6e12"/>
<rect x="592.36" y="69.59" width="2.24" height="2.24" rx="0.5" fill="#6e6e12"/>
<rect x="594.93" y="66.40" width="2.24" height="2.24" rx="0.5" fill="#6e6e12"/>
<rect x="597.50" y="63.25" width="2.24" height="2.24" rx="0.5" fill="#6e6e12"/>
<rect x="600.08" y="60.14" width="2.24" height="2.24" rx="0.5" fill="#6e6e12"/>
</g>
<rect x="438" y="315.6" width="289" height="266.9" fill="#fff"/>
<line x1="455.00" y1="334.50" x2="717.00" y2="334.50" stroke="#c4c4c4" stroke-width="0.65"/>
<line x1="455.00" y1="368.16" x2="717.00" y2="368.16" stroke="#c4c4c4" stroke-width="0.65"/>
<line x1="455.00" y1="401.81" x2="717.00" y2="401.81" stroke="#c4c4c4" stroke-width="0.65"/>
<line x1="455.00" y1="435.47" x2="717.00" y2="435.47" stroke="#c4c4c4" stroke-width="0.65"/>
<line x1="455.00" y1="469.13" x2="717.00" y2="469.13" stroke="#c4c4c4" stroke-width="0.65"/>
<line x1="455.00" y1="502.79" x2="717.00" y2="502.79" stroke="#c4c4c4" stroke-width="0.65"/>
<line x1="455.00" y1="536.44" x2="717.00" y2="536.44" stroke="#c4c4c4" stroke-width="0.65"/>
<line x1="455.00" y1="570.10" x2="717.00" y2="570.10" stroke="#c4c4c4" stroke-width="0.65"/>
<line x1="457.00" y1="334.10" x2="457.00" y2="573.10" stroke="#c4c4c4" stroke-width="0.65"/>
<line x1="521.38" y1="334.10" x2="521.38" y2="573.10" stroke="#c4c4c4" stroke-width="0.65"/>
<line x1="585.75" y1="334.10" x2="585.75" y2="573.10" stroke="#c4c4c4" stroke-width="0.65"/>
<line x1="650.12" y1="334.10" x2="650.12" y2="573.10" stroke="#c4c4c4" stroke-width="0.65"/>
<line x1="714.50" y1="334.10" x2="714.50" y2="573.10" stroke="#c4c4c4" stroke-width="0.65"/>
<text x="440.30" y="324.80" font-size="7.3" fill="#111" text-anchor="start">S11 |Z|</text>
<text x="440.30" y="336.70" font-size="7.8" fill="#111" text-anchor="start">70.00</text>
<text x="440.30" y="370.36" font-size="7.8" fill="#111" text-anchor="start">62.86</text>
<text x="440.30" y="404.01" font-size="7.8" fill="#111" text-anchor="start">55.71</text>
<text x="440.30" y="437.67" font-size="7.8" fill="#111" text-anchor="start">48.57</text>
<text x="440.30" y="471.33" font-size="7.8" fill="#111" text-anchor="start">41.43</text>
<text x="440.30" y="504.99" font-size="7.8" fill="#111" text-anchor="start">34.29</text>
<text x="440.30" y="538.64" font-size="7.8" fill="#111" text-anchor="start">27.14</text>
<text x="440.30" y="570.10" font-size="7.8" fill="#111" text-anchor="start">20.00</text>
<text x="444.00" y="579.60" font-size="8.1" fill="#111" text-anchor="start">7.000M</text>
<text x="508.38" y="579.60" font-size="8.1" fill="#111" text-anchor="start">7.250M</text>
<text x="572.75" y="579.60" font-size="8.1" fill="#111" text-anchor="start">7.500M</text>
<text x="637.12" y="579.60" font-size="8.1" fill="#111" text-anchor="start">7.750M</text>
<text x="701.50" y="579.60" font-size="8.1" fill="#111" text-anchor="start">8.000M</text>
<clipPath id="cz"><rect x="438" y="315.6" width="289" height="266.9"/></clipPath>
<g clip-path="url(#cz)">
<rect x="455.88" y="357.83" width="2.24" height="2.24" rx="0.5" fill="#8a3a14"/>
<rect x="458.45" y="361.22" width="2.24" height="2.24" rx="0.5" fill="#6e6e12"/>
<rect x="461.03" y="364.82" width="2.24" height="2.24" rx="0.5" fill="#6e6e12"/>
<rect x="463.61" y="368.62" width="2.24" height="2.24" rx="0.5" fill="#6e6e12"/>
<rect x="466.18" y="372.61" width="2.24" height="2.24" rx="0.5" fill="#6e6e12"/>
<rect x="468.75" y="376.77" width="2.24" height="2.24" rx="0.5" fill="#6e6e12"/>
<rect x="471.33" y="381.11" width="2.24" height="2.24" rx="0.5" fill="#6e6e12"/>
<rect x="473.90" y="385.60" width="2.24" height="2.24" rx="0.5" fill="#6e6e12"/>
<rect x="476.48" y="390.22" width="2.24" height="2.24" rx="0.5" fill="#6e6e12"/>
<rect x="479.06" y="394.95" width="2.24" height="2.24" rx="0.5" fill="#6e6e12"/>
<rect x="481.63" y="399.78" width="2.24" height="2.24" rx="0.5" fill="#4e7a14"/>
<rect x="484.20" y="404.68" width="2.24" height="2.24" rx="0.5" fill="#6e6e12"/>
<rect x="486.78" y="409.63" width="2.24" height="2.24" rx="0.5" fill="#6e6e12"/>
<rect x="489.36" y="414.61" width="2.24" height="2.24" rx="0.5" fill="#6e6e12"/>
<rect x="491.93" y="419.59" width="2.24" height="2.24" rx="0.5" fill="#6e6e12"/>
<rect x="494.50" y="424.56" width="2.24" height="2.24" rx="0.5" fill="#6e6e12"/>
<rect x="497.08" y="429.47" width="2.24" height="2.24" rx="0.5" fill="#6e6e12"/>
<rect x="499.65" y="434.33" width="2.24" height="2.24" rx="0.5" fill="#6e6e12"/>
<rect x="502.23" y="439.10" width="2.24" height="2.24" rx="0.5" fill="#6e6e12"/>
<rect x="504.81" y="443.79" width="2.24" height="2.24" rx="0.5" fill="#6e6e12"/>
<rect x="507.38" y="448.38" width="2.24" height="2.24" rx="0.5" fill="#26263a"/>
<rect x="509.95" y="452.87" width="2.24" height="2.24" rx="0.5" fill="#6e6e12"/>
<rect x="512.53" y="457.26" width="2.24" height="2.24" rx="0.5" fill="#6e6e12"/>
<rect x="515.11" y="461.54" width="2.24" height="2.24" rx="0.5" fill="#6e6e12"/>
<rect x="517.68" y="465.71" width="2.24" height="2.24" rx="0.5" fill="#6e6e12"/>
<rect x="520.25" y="469.78" width="2.24" height="2.24" rx="0.5" fill="#6e6e12"/>
<rect x="522.83" y="473.75" width="2.24" height="2.24" rx="0.5" fill="#6e6e12"/>
<rect x="525.40" y="477.61" width="2.24" height="2.24" rx="0.5" fill="#6e6e12"/>
<rect x="527.98" y="481.38" width="2.24" height="2.24" rx="0.5" fill="#6e6e12"/>
<rect x="530.55" y="485.04" width="2.24" height="2.24" rx="0.5" fill="#6e6e12"/>
<rect x="533.13" y="488.60" width="2.24" height="2.24" rx="0.5" fill="#6e6e12"/>
<rect x="535.71" y="492.06" width="2.24" height="2.24" rx="0.5" fill="#6e6e12"/>
<rect x="538.28" y="495.41" width="2.24" height="2.24" rx="0.5" fill="#6e6e12"/>
<rect x="540.86" y="498.66" width="2.24" height="2.24" rx="0.5" fill="#6e6e12"/>
<rect x="543.43" y="501.80" width="2.24" height="2.24" rx="0.5" fill="#6e6e12"/>
<rect x="546.00" y="504.82" width="2.24" height="2.24" rx="0.5" fill="#6e6e12"/>
<rect x="548.58" y="507.74" width="2.24" height="2.24" rx="0.5" fill="#6e6e12"/>
<rect x="551.15" y="510.55" width="2.24" height="2.24" rx="0.5" fill="#6e6e12"/>
<rect x="553.73" y="513.25" width="2.24" height="2.24" rx="0.5" fill="#6e6e12"/>
<rect x="556.30" y="515.85" width="2.24" height="2.24" rx="0.5" fill="#6e6e12"/>
<rect x="558.88" y="518.33" width="2.24" height="2.24" rx="0.5" fill="#6e6e12"/>
<rect x="561.46" y="520.70" width="2.24" height="2.24" rx="0.5" fill="#6e6e12"/>
<rect x="564.03" y="522.97" width="2.24" height="2.24" rx="0.5" fill="#6e6e12"/>
<rect x="566.61" y="525.14" width="2.24" height="2.24" rx="0.5" fill="#6e6e12"/>
<rect x="569.18" y="527.20" width="2.24" height="2.24" rx="0.5" fill="#6e6e12"/>
<rect x="571.75" y="529.17" width="2.24" height="2.24" rx="0.5" fill="#6e6e12"/>
<rect x="574.33" y="531.03" width="2.24" height="2.24" rx="0.5" fill="#6e6e12"/>
<rect x="576.90" y="532.80" width="2.24" height="2.24" rx="0.5" fill="#6e6e12"/>
<rect x="579.48" y="534.47" width="2.24" height="2.24" rx="0.5" fill="#6e6e12"/>
<rect x="582.05" y="536.06" width="2.24" height="2.24" rx="0.5" fill="#6e6e12"/>
<rect x="584.63" y="537.55" width="2.24" height="2.24" rx="0.5" fill="#6e6e12"/>
<rect x="587.21" y="538.96" width="2.24" height="2.24" rx="0.5" fill="#6e6e12"/>
<rect x="589.78" y="540.28" width="2.24" height="2.24" rx="0.5" fill="#6e6e12"/>
<rect x="592.36" y="541.53" width="2.24" height="2.24" rx="0.5" fill="#6e6e12"/>
<rect x="594.93" y="542.70" width="2.24" height="2.24" rx="0.5" fill="#6e6e12"/>
<rect x="597.50" y="543.79" width="2.24" height="2.24" rx="0.5" fill="#6e6e12"/>
<rect x="600.08" y="544.81" width="2.24" height="2.24" rx="0.5" fill="#6e6e12"/>
<rect x="602.65" y="545.75" width="2.24" height="2.24" rx="0.5" fill="#6e6e12"/>
<rect x="605.23" y="546.63" width="2.24" height="2.24" rx="0.5" fill="#6e6e12"/>
<rect x="607.80" y="547.45" width="2.24" height="2.24" rx="0.5" fill="#6e6e12"/>
<rect x="610.38" y="548.19" width="2.24" height="2.24" rx="0.5" fill="#6e6e12"/>
<rect x="612.96" y="548.88" width="2.24" height="2.24" rx="0.5" fill="#6e6e12"/>
<rect x="615.53" y="549.50" width="2.24" height="2.24" rx="0.5" fill="#6e6e12"/>
<rect x="618.11" y="550.06" width="2.24" height="2.24" rx="0.5" fill="#6e6e12"/>
<rect x="620.68" y="550.57" width="2.24" height="2.24" rx="0.5" fill="#6e6e12"/>
<rect x="623.25" y="551.02" width="2.24" height="2.24" rx="0.5" fill="#6e6e12"/>
<rect x="625.83" y="551.41" width="2.24" height="2.24" rx="0.5" fill="#6e6e12"/>
<rect x="628.40" y="551.74" width="2.24" height="2.24" rx="0.5" fill="#6e6e12"/>
<rect x="630.98" y="552.02" width="2.24" height="2.24" rx="0.5" fill="#6e6e12"/>
<rect x="633.55" y="552.24" width="2.24" height="2.24" rx="0.5" fill="#6e6e12"/>
<rect x="636.13" y="552.41" width="2.24" height="2.24" rx="0.5" fill="#6e6e12"/>
<rect x="638.71" y="552.52" width="2.24" height="2.24" rx="0.5" fill="#6e6e12"/>
<rect x="641.28" y="552.57" width="2.24" height="2.24" rx="0.5" fill="#6e6e12"/>
<rect x="643.86" y="552.58" width="2.24" height="2.24" rx="0.5" fill="#6e6e12"/>
<rect x="646.43" y="552.52" width="2.24" height="2.24" rx="0.5" fill="#6e6e12"/>
<rect x="649.00" y="552.42" width="2.24" height="2.24" rx="0.5" fill="#6e6e12"/>
<rect x="651.58" y="552.26" width="2.24" height="2.24" rx="0.5" fill="#6e6e12"/>
<rect x="654.15" y="552.05" width="2.24" height="2.24" rx="0.5" fill="#6e6e12"/>
<rect x="656.73" y="551.79" width="2.24" height="2.24" rx="0.5" fill="#6e6e12"/>
<rect x="659.30" y="551.47" width="2.24" height="2.24" rx="0.5" fill="#6e6e12"/>
<rect x="661.88" y="551.11" width="2.24" height="2.24" rx="0.5" fill="#6e6e12"/>
<rect x="664.46" y="550.70" width="2.24" height="2.24" rx="0.5" fill="#6e6e12"/>
<rect x="667.03" y="550.24" width="2.24" height="2.24" rx="0.5" fill="#6e6e12"/>
<rect x="669.61" y="549.73" width="2.24" height="2.24" rx="0.5" fill="#6e6e12"/>
<rect x="672.18" y="549.18" width="2.24" height="2.24" rx="0.5" fill="#6e6e12"/>
<rect x="674.75" y="548.59" width="2.24" height="2.24" rx="0.5" fill="#6e6e12"/>
<rect x="677.33" y="547.95" width="2.24" height="2.24" rx="0.5" fill="#6e6e12"/>
<rect x="679.90" y="547.28" width="2.24" height="2.24" rx="0.5" fill="#6e6e12"/>
<rect x="682.48" y="546.57" width="2.24" height="2.24" rx="0.5" fill="#6e6e12"/>
<rect x="685.05" y="545.82" width="2.24" height="2.24" rx="0.5" fill="#6e6e12"/>
<rect x="687.63" y="545.05" width="2.24" height="2.24" rx="0.5" fill="#6e6e12"/>
<rect x="690.21" y="544.24" width="2.24" height="2.24" rx="0.5" fill="#6e6e12"/>
<rect x="692.78" y="543.41" width="2.24" height="2.24" rx="0.5" fill="#6e6e12"/>
<rect x="695.36" y="542.55" width="2.24" height="2.24" rx="0.5" fill="#6e6e12"/>
<rect x="697.93" y="541.68" width="2.24" height="2.24" rx="0.5" fill="#6e6e12"/>
<rect x="700.50" y="540.79" width="2.24" height="2.24" rx="0.5" fill="#6e6e12"/>
<rect x="703.08" y="539.88" width="2.24" height="2.24" rx="0.5" fill="#6e6e12"/>
<rect x="705.65" y="538.97" width="2.24" height="2.24" rx="0.5" fill="#6e6e12"/>
<rect x="708.23" y="538.05" width="2.24" height="2.24" rx="0.5" fill="#6e6e12"/>
<rect x="710.80" y="537.13" width="2.24" height="2.24" rx="0.5" fill="#6e6e12"/>
<rect x="713.38" y="536.21" width="2.24" height="2.24" rx="0.5" fill="#6e6e12"/>
</g>
<rect x="732.8" y="315.6" width="288.1" height="266.9" fill="#fff"/>
<line x1="756.00" y1="334.50" x2="992.60" y2="334.50" stroke="#c4c4c4" stroke-width="0.65"/>
<line x1="756.00" y1="368.16" x2="992.60" y2="368.16" stroke="#c4c4c4" stroke-width="0.65"/>
<line x1="756.00" y1="401.81" x2="992.60" y2="401.81" stroke="#c4c4c4" stroke-width="0.65"/>
<line x1="756.00" y1="435.47" x2="992.60" y2="435.47" stroke="#c4c4c4" stroke-width="0.65"/>
<line x1="756.00" y1="469.13" x2="992.60" y2="469.13" stroke="#c4c4c4" stroke-width="0.65"/>
<line x1="756.00" y1="502.79" x2="992.60" y2="502.79" stroke="#c4c4c4" stroke-width="0.65"/>
<line x1="756.00" y1="536.44" x2="992.60" y2="536.44" stroke="#c4c4c4" stroke-width="0.65"/>
<line x1="756.00" y1="570.10" x2="992.60" y2="570.10" stroke="#c4c4c4" stroke-width="0.65"/>
<line x1="761.00" y1="334.10" x2="761.00" y2="573.10" stroke="#c4c4c4" stroke-width="0.65"/>
<line x1="838.20" y1="334.10" x2="838.20" y2="573.10" stroke="#c4c4c4" stroke-width="0.65"/>
<line x1="915.40" y1="334.10" x2="915.40" y2="573.10" stroke="#c4c4c4" stroke-width="0.65"/>
<line x1="992.60" y1="334.10" x2="992.60" y2="573.10" stroke="#c4c4c4" stroke-width="0.65"/>
<text x="764.00" y="324.80" font-size="7.3" fill="#111" text-anchor="start">S11 R+jX (Ω)</text>
<text x="739.20" y="324.80" font-size="7.3" fill="#111" text-anchor="start">R</text>
<rect x="744.6" y="321.0" width="4.2" height="1.1" fill="#9a9a20"/>
<text x="998.80" y="324.80" font-size="7.3" fill="#111" text-anchor="start">X</text>
<rect x="992.2" y="321.0" width="3.8" height="1.1" fill="#6a0f6a"/>
<text x="735.00" y="336.70" font-size="7.8" fill="#111" text-anchor="start">65.0</text>
<text x="735.00" y="370.36" font-size="7.8" fill="#111" text-anchor="start">58.9</text>
<text x="735.00" y="404.01" font-size="7.8" fill="#111" text-anchor="start">52.7</text>
<text x="735.00" y="437.67" font-size="7.8" fill="#111" text-anchor="start">46.6</text>
<text x="735.00" y="471.33" font-size="7.8" fill="#111" text-anchor="start">40.4</text>
<text x="735.00" y="504.99" font-size="7.8" fill="#111" text-anchor="start">34.3</text>
<text x="735.00" y="538.64" font-size="7.8" fill="#111" text-anchor="start">28.1</text>
<text x="735.00" y="570.10" font-size="7.8" fill="#111" text-anchor="start">22.0</text>
<text x="997.30" y="336.70" font-size="7.8" fill="#111" text-anchor="start">15.0</text>
<text x="997.30" y="370.36" font-size="7.8" fill="#111" text-anchor="start">10.7</text>
<text x="997.30" y="404.01" font-size="7.8" fill="#111" text-anchor="start">6.43</text>
<text x="997.30" y="437.67" font-size="7.8" fill="#111" text-anchor="start">2.14</text>
<text x="997.30" y="471.33" font-size="7.8" fill="#111" text-anchor="start">-2.14</text>
<text x="997.30" y="504.99" font-size="7.8" fill="#111" text-anchor="start">-6.43</text>
<text x="997.30" y="538.64" font-size="7.8" fill="#111" text-anchor="start">-10.7</text>
<text x="997.30" y="570.10" font-size="7.8" fill="#111" text-anchor="start">-15.0</text>
<text x="748.00" y="579.60" font-size="8.1" fill="#111" text-anchor="start">7.000M</text>
<text x="825.20" y="579.60" font-size="8.1" fill="#111" text-anchor="start">7.333M</text>
<text x="902.40" y="579.60" font-size="8.1" fill="#111" text-anchor="start">7.667M</text>
<text x="979.60" y="579.60" font-size="8.1" fill="#111" text-anchor="start">8.000M</text>
<clipPath id="cr"><rect x="732.8" y="315.6" width="288.1" height="266.9"/></clipPath>
<g clip-path="url(#cr)">
<rect x="759.88" y="334.41" width="2.24" height="2.24" rx="0.5" fill="#8a3a14"/>
<rect x="762.20" y="338.48" width="2.24" height="2.24" rx="0.5" fill="#6e6e12"/>
<rect x="764.51" y="343.01" width="2.24" height="2.24" rx="0.5" fill="#6e6e12"/>
<rect x="766.83" y="347.94" width="2.24" height="2.24" rx="0.5" fill="#6e6e12"/>
<rect x="769.14" y="353.23" width="2.24" height="2.24" rx="0.5" fill="#6e6e12"/>
<rect x="771.46" y="358.83" width="2.24" height="2.24" rx="0.5" fill="#6e6e12"/>
<rect x="773.78" y="364.70" width="2.24" height="2.24" rx="0.5" fill="#6e6e12"/>
<rect x="776.09" y="370.80" width="2.24" height="2.24" rx="0.5" fill="#6e6e12"/>
<rect x="778.41" y="377.07" width="2.24" height="2.24" rx="0.5" fill="#6e6e12"/>
<rect x="780.72" y="383.48" width="2.24" height="2.24" rx="0.5" fill="#6e6e12"/>
<rect x="783.04" y="389.99" width="2.24" height="2.24" rx="0.5" fill="#4e7a14"/>
<rect x="785.36" y="396.56" width="2.24" height="2.24" rx="0.5" fill="#6e6e12"/>
<rect x="787.67" y="403.14" width="2.24" height="2.24" rx="0.5" fill="#6e6e12"/>
<rect x="789.99" y="409.71" width="2.24" height="2.24" rx="0.5" fill="#6e6e12"/>
<rect x="792.30" y="416.22" width="2.24" height="2.24" rx="0.5" fill="#6e6e12"/>
<rect x="794.62" y="422.64" width="2.24" height="2.24" rx="0.5" fill="#6e6e12"/>
<rect x="796.94" y="428.93" width="2.24" height="2.24" rx="0.5" fill="#6e6e12"/>
<rect x="799.25" y="435.06" width="2.24" height="2.24" rx="0.5" fill="#6e6e12"/>
<rect x="801.57" y="441.03" width="2.24" height="2.24" rx="0.5" fill="#6e6e12"/>
<rect x="803.88" y="446.80" width="2.24" height="2.24" rx="0.5" fill="#6e6e12"/>
<rect x="806.20" y="452.38" width="2.24" height="2.24" rx="0.5" fill="#26263a"/>
<rect x="808.52" y="457.77" width="2.24" height="2.24" rx="0.5" fill="#6e6e12"/>
<rect x="810.83" y="462.95" width="2.24" height="2.24" rx="0.5" fill="#6e6e12"/>
<rect x="813.15" y="467.93" width="2.24" height="2.24" rx="0.5" fill="#6e6e12"/>
<rect x="815.46" y="472.72" width="2.24" height="2.24" rx="0.5" fill="#6e6e12"/>
<rect x="817.78" y="477.31" width="2.24" height="2.24" rx="0.5" fill="#6e6e12"/>
<rect x="820.10" y="481.73" width="2.24" height="2.24" rx="0.5" fill="#6e6e12"/>
<rect x="822.41" y="485.97" width="2.24" height="2.24" rx="0.5" fill="#6e6e12"/>
<rect x="824.73" y="490.04" width="2.24" height="2.24" rx="0.5" fill="#6e6e12"/>
<rect x="827.04" y="493.95" width="2.24" height="2.24" rx="0.5" fill="#6e6e12"/>
<rect x="829.36" y="497.69" width="2.24" height="2.24" rx="0.5" fill="#6e6e12"/>
<rect x="831.68" y="501.29" width="2.24" height="2.24" rx="0.5" fill="#6e6e12"/>
<rect x="833.99" y="504.73" width="2.24" height="2.24" rx="0.5" fill="#6e6e12"/>
<rect x="836.31" y="508.03" width="2.24" height="2.24" rx="0.5" fill="#6e6e12"/>
<rect x="838.62" y="511.18" width="2.24" height="2.24" rx="0.5" fill="#6e6e12"/>
<rect x="840.94" y="514.18" width="2.24" height="2.24" rx="0.5" fill="#6e6e12"/>
<rect x="843.26" y="517.06" width="2.24" height="2.24" rx="0.5" fill="#6e6e12"/>
<rect x="845.57" y="519.79" width="2.24" height="2.24" rx="0.5" fill="#6e6e12"/>
<rect x="847.89" y="522.40" width="2.24" height="2.24" rx="0.5" fill="#6e6e12"/>
<rect x="850.20" y="524.89" width="2.24" height="2.24" rx="0.5" fill="#6e6e12"/>
<rect x="852.52" y="527.25" width="2.24" height="2.24" rx="0.5" fill="#6e6e12"/>
<rect x="854.84" y="529.49" width="2.24" height="2.24" rx="0.5" fill="#6e6e12"/>
<rect x="857.15" y="531.62" width="2.24" height="2.24" rx="0.5" fill="#6e6e12"/>
<rect x="859.47" y="533.65" width="2.24" height="2.24" rx="0.5" fill="#6e6e12"/>
<rect x="861.78" y="535.56" width="2.24" height="2.24" rx="0.5" fill="#6e6e12"/>
<rect x="864.10" y="537.38" width="2.24" height="2.24" rx="0.5" fill="#6e6e12"/>
<rect x="866.42" y="539.11" width="2.24" height="2.24" rx="0.5" fill="#6e6e12"/>
<rect x="868.73" y="540.74" width="2.24" height="2.24" rx="0.5" fill="#6e6e12"/>
<rect x="871.05" y="542.29" width="2.24" height="2.24" rx="0.5" fill="#6e6e12"/>
<rect x="873.36" y="543.76" width="2.24" height="2.24" rx="0.5" fill="#6e6e12"/>
<rect x="875.68" y="545.15" width="2.24" height="2.24" rx="0.5" fill="#6e6e12"/>
<rect x="878.00" y="546.47" width="2.24" height="2.24" rx="0.5" fill="#6e6e12"/>
<rect x="880.31" y="547.72" width="2.24" height="2.24" rx="0.5" fill="#6e6e12"/>
<rect x="882.63" y="548.91" width="2.24" height="2.24" rx="0.5" fill="#6e6e12"/>
<rect x="884.94" y="550.04" width="2.24" height="2.24" rx="0.5" fill="#6e6e12"/>
<rect x="887.26" y="551.12" width="2.24" height="2.24" rx="0.5" fill="#6e6e12"/>
<rect x="889.58" y="552.14" width="2.24" height="2.24" rx="0.5" fill="#6e6e12"/>
<rect x="891.89" y="553.12" width="2.24" height="2.24" rx="0.5" fill="#6e6e12"/>
<rect x="894.21" y="554.04" width="2.24" height="2.24" rx="0.5" fill="#6e6e12"/>
<rect x="896.52" y="554.93" width="2.24" height="2.24" rx="0.5" fill="#6e6e12"/>
<rect x="898.84" y="555.77" width="2.24" height="2.24" rx="0.5" fill="#6e6e12"/>
<rect x="901.16" y="556.57" width="2.24" height="2.24" rx="0.5" fill="#6e6e12"/>
<rect x="903.47" y="557.34" width="2.24" height="2.24" rx="0.5" fill="#6e6e12"/>
<rect x="905.79" y="558.06" width="2.24" height="2.24" rx="0.5" fill="#6e6e12"/>
<rect x="908.10" y="558.76" width="2.24" height="2.24" rx="0.5" fill="#6e6e12"/>
<rect x="910.42" y="559.42" width="2.24" height="2.24" rx="0.5" fill="#6e6e12"/>
<rect x="912.74" y="560.04" width="2.24" height="2.24" rx="0.5" fill="#6e6e12"/>
<rect x="915.05" y="560.64" width="2.24" height="2.24" rx="0.5" fill="#6e6e12"/>
<rect x="917.37" y="561.20" width="2.24" height="2.24" rx="0.5" fill="#6e6e12"/>
<rect x="919.68" y="561.73" width="2.24" height="2.24" rx="0.5" fill="#6e6e12"/>
<rect x="922.00" y="562.23" width="2.24" height="2.24" rx="0.5" fill="#6e6e12"/>
<rect x="924.32" y="562.70" width="2.24" height="2.24" rx="0.5" fill="#6e6e12"/>
<rect x="926.63" y="563.14" width="2.24" height="2.24" rx="0.5" fill="#6e6e12"/>
<rect x="928.95" y="563.55" width="2.24" height="2.24" rx="0.5" fill="#6e6e12"/>
<rect x="931.26" y="563.93" width="2.24" height="2.24" rx="0.5" fill="#6e6e12"/>
<rect x="933.58" y="564.29" width="2.24" height="2.24" rx="0.5" fill="#6e6e12"/>
<rect x="935.90" y="564.61" width="2.24" height="2.24" rx="0.5" fill="#6e6e12"/>
<rect x="938.21" y="564.90" width="2.24" height="2.24" rx="0.5" fill="#6e6e12"/>
<rect x="940.53" y="565.17" width="2.24" height="2.24" rx="0.5" fill="#6e6e12"/>
<rect x="942.84" y="565.41" width="2.24" height="2.24" rx="0.5" fill="#6e6e12"/>
<rect x="945.16" y="565.62" width="2.24" height="2.24" rx="0.5" fill="#6e6e12"/>
<rect x="947.48" y="565.81" width="2.24" height="2.24" rx="0.5" fill="#6e6e12"/>
<rect x="949.79" y="565.97" width="2.24" height="2.24" rx="0.5" fill="#6e6e12"/>
<rect x="952.11" y="566.11" width="2.24" height="2.24" rx="0.5" fill="#6e6e12"/>
<rect x="954.42" y="566.22" width="2.24" height="2.24" rx="0.5" fill="#6e6e12"/>
<rect x="956.74" y="566.30" width="2.24" height="2.24" rx="0.5" fill="#6e6e12"/>
<rect x="959.06" y="566.36" width="2.24" height="2.24" rx="0.5" fill="#6e6e12"/>
<rect x="961.37" y="566.40" width="2.24" height="2.24" rx="0.5" fill="#6e6e12"/>
<rect x="963.69" y="566.41" width="2.24" height="2.24" rx="0.5" fill="#6e6e12"/>
<rect x="966.00" y="566.40" width="2.24" height="2.24" rx="0.5" fill="#6e6e12"/>
<rect x="968.32" y="566.37" width="2.24" height="2.24" rx="0.5" fill="#6e6e12"/>
<rect x="970.64" y="566.31" width="2.24" height="2.24" rx="0.5" fill="#6e6e12"/>
<rect x="972.95" y="566.24" width="2.24" height="2.24" rx="0.5" fill="#6e6e12"/>
<rect x="975.27" y="566.14" width="2.24" height="2.24" rx="0.5" fill="#6e6e12"/>
<rect x="977.58" y="566.02" width="2.24" height="2.24" rx="0.5" fill="#6e6e12"/>
<rect x="979.90" y="565.88" width="2.24" height="2.24" rx="0.5" fill="#6e6e12"/>
<rect x="982.22" y="565.72" width="2.24" height="2.24" rx="0.5" fill="#6e6e12"/>
<rect x="984.53" y="565.54" width="2.24" height="2.24" rx="0.5" fill="#6e6e12"/>
<rect x="986.85" y="565.34" width="2.24" height="2.24" rx="0.5" fill="#6e6e12"/>
<rect x="989.16" y="565.12" width="2.24" height="2.24" rx="0.5" fill="#6e6e12"/>
<rect x="991.48" y="564.89" width="2.24" height="2.24" rx="0.5" fill="#6e6e12"/>
<rect x="759.88" y="451.15" width="2.24" height="2.24" rx="0.5" fill="#80103a"/>
<rect x="762.20" y="464.56" width="2.24" height="2.24" rx="0.5" fill="#6a0f6a"/>
<rect x="764.51" y="476.93" width="2.24" height="2.24" rx="0.5" fill="#6a0f6a"/>
<rect x="766.83" y="488.32" width="2.24" height="2.24" rx="0.5" fill="#6a0f6a"/>
<rect x="769.14" y="498.75" width="2.24" height="2.24" rx="0.5" fill="#6a0f6a"/>
<rect x="771.46" y="508.26" width="2.24" height="2.24" rx="0.5" fill="#6a0f6a"/>
<rect x="773.78" y="516.88" width="2.24" height="2.24" rx="0.5" fill="#6a0f6a"/>
<rect x="776.09" y="524.65" width="2.24" height="2.24" rx="0.5" fill="#6a0f6a"/>
<rect x="778.41" y="531.60" width="2.24" height="2.24" rx="0.5" fill="#6a0f6a"/>
<rect x="780.72" y="537.77" width="2.24" height="2.24" rx="0.5" fill="#6a0f6a"/>
<rect x="783.04" y="543.18" width="2.24" height="2.24" rx="0.5" fill="#3a5a3a"/>
<rect x="785.36" y="547.89" width="2.24" height="2.24" rx="0.5" fill="#6a0f6a"/>
<rect x="787.67" y="551.91" width="2.24" height="2.24" rx="0.5" fill="#6a0f6a"/>
<rect x="789.99" y="555.29" width="2.24" height="2.24" rx="0.5" fill="#6a0f6a"/>
<rect x="792.30" y="558.06" width="2.24" height="2.24" rx="0.5" fill="#6a0f6a"/>
<rect x="794.62" y="560.25" width="2.24" height="2.24" rx="0.5" fill="#6a0f6a"/>
<rect x="796.94" y="561.90" width="2.24" height="2.24" rx="0.5" fill="#6a0f6a"/>
<rect x="799.25" y="563.05" width="2.24" height="2.24" rx="0.5" fill="#6a0f6a"/>
<rect x="801.57" y="563.73" width="2.24" height="2.24" rx="0.5" fill="#6a0f6a"/>
<rect x="803.88" y="563.97" width="2.24" height="2.24" rx="0.5" fill="#6a0f6a"/>
<rect x="806.20" y="563.81" width="2.24" height="2.24" rx="0.5" fill="#2a1050"/>
<rect x="808.52" y="563.28" width="2.24" height="2.24" rx="0.5" fill="#6a0f6a"/>
<rect x="810.83" y="562.41" width="2.24" height="2.24" rx="0.5" fill="#6a0f6a"/>
<rect x="813.15" y="561.23" width="2.24" height="2.24" rx="0.5" fill="#6a0f6a"/>
<rect x="815.46" y="559.78" width="2.24" height="2.24" rx="0.5" fill="#6a0f6a"/>
<rect x="817.78" y="558.07" width="2.24" height="2.24" rx="0.5" fill="#6a0f6a"/>
<rect x="820.10" y="556.13" width="2.24" height="2.24" rx="0.5" fill="#6a0f6a"/>
<rect x="822.41" y="553.99" width="2.24" height="2.24" rx="0.5" fill="#6a0f6a"/>
<rect x="824.73" y="551.67" width="2.24" height="2.24" rx="0.5" fill="#6a0f6a"/>
<rect x="827.04" y="549.20" width="2.24" height="2.24" rx="0.5" fill="#6a0f6a"/>
<rect x="829.36" y="546.58" width="2.24" height="2.24" rx="0.5" fill="#6a0f6a"/>
<rect x="831.68" y="543.84" width="2.24" height="2.24" rx="0.5" fill="#6a0f6a"/>
<rect x="833.99" y="541.00" width="2.24" height="2.24" rx="0.5" fill="#6a0f6a"/>
<rect x="836.31" y="538.07" width="2.24" height="2.24" rx="0.5" fill="#6a0f6a"/>
<rect x="838.62" y="535.07" width="2.24" height="2.24" rx="0.5" fill="#6a0f6a"/>
<rect x="840.94" y="532.01" width="2.24" height="2.24" rx="0.5" fill="#6a0f6a"/>
<rect x="843.26" y="528.90" width="2.24" height="2.24" rx="0.5" fill="#6a0f6a"/>
<rect x="845.57" y="525.74" width="2.24" height="2.24" rx="0.5" fill="#6a0f6a"/>
<rect x="847.89" y="522.56" width="2.24" height="2.24" rx="0.5" fill="#6a0f6a"/>
<rect x="850.20" y="519.35" width="2.24" height="2.24" rx="0.5" fill="#6a0f6a"/>
<rect x="852.52" y="516.12" width="2.24" height="2.24" rx="0.5" fill="#6a0f6a"/>
<rect x="854.84" y="512.88" width="2.24" height="2.24" rx="0.5" fill="#6a0f6a"/>
<rect x="857.15" y="509.63" width="2.24" height="2.24" rx="0.5" fill="#6a0f6a"/>
<rect x="859.47" y="506.37" width="2.24" height="2.24" rx="0.5" fill="#6a0f6a"/>
<rect x="861.78" y="503.10" width="2.24" height="2.24" rx="0.5" fill="#6a0f6a"/>
<rect x="864.10" y="499.83" width="2.24" height="2.24" rx="0.5" fill="#6a0f6a"/>
<rect x="866.42" y="496.56" width="2.24" height="2.24" rx="0.5" fill="#6a0f6a"/>
<rect x="868.73" y="493.30" width="2.24" height="2.24" rx="0.5" fill="#6a0f6a"/>
<rect x="871.05" y="490.04" width="2.24" height="2.24" rx="0.5" fill="#6a0f6a"/>
<rect x="873.36" y="486.79" width="2.24" height="2.24" rx="0.5" fill="#6a0f6a"/>
<rect x="875.68" y="483.56" width="2.24" height="2.24" rx="0.5" fill="#6a0f6a"/>
<rect x="878.00" y="480.33" width="2.24" height="2.24" rx="0.5" fill="#6a0f6a"/>
<rect x="880.31" y="477.12" width="2.24" height="2.24" rx="0.5" fill="#6a0f6a"/>
<rect x="882.63" y="473.93" width="2.24" height="2.24" rx="0.5" fill="#6a0f6a"/>
<rect x="884.94" y="470.75" width="2.24" height="2.24" rx="0.5" fill="#6a0f6a"/>
<rect x="887.26" y="467.59" width="2.24" height="2.24" rx="0.5" fill="#6a0f6a"/>
<rect x="889.58" y="464.46" width="2.24" height="2.24" rx="0.5" fill="#6a0f6a"/>
<rect x="891.89" y="461.34" width="2.24" height="2.24" rx="0.5" fill="#6a0f6a"/>
<rect x="894.21" y="458.25" width="2.24" height="2.24" rx="0.5" fill="#6a0f6a"/>
<rect x="896.52" y="455.17" width="2.24" height="2.24" rx="0.5" fill="#6a0f6a"/>
<rect x="898.84" y="452.12" width="2.24" height="2.24" rx="0.5" fill="#6a0f6a"/>
<rect x="901.16" y="449.09" width="2.24" height="2.24" rx="0.5" fill="#6a0f6a"/>
<rect x="903.47" y="446.07" width="2.24" height="2.24" rx="0.5" fill="#6a0f6a"/>
<rect x="905.79" y="443.08" width="2.24" height="2.24" rx="0.5" fill="#6a0f6a"/>
<rect x="908.10" y="440.10" width="2.24" height="2.24" rx="0.5" fill="#6a0f6a"/>
<rect x="910.42" y="437.13" width="2.24" height="2.24" rx="0.5" fill="#6a0f6a"/>
<rect x="912.74" y="434.18" width="2.24" height="2.24" rx="0.5" fill="#6a0f6a"/>
<rect x="915.05" y="431.24" width="2.24" height="2.24" rx="0.5" fill="#6a0f6a"/>
<rect x="917.37" y="428.31" width="2.24" height="2.24" rx="0.5" fill="#6a0f6a"/>
<rect x="919.68" y="425.38" width="2.24" height="2.24" rx="0.5" fill="#6a0f6a"/>
<rect x="922.00" y="422.45" width="2.24" height="2.24" rx="0.5" fill="#6a0f6a"/>
<rect x="924.32" y="419.52" width="2.24" height="2.24" rx="0.5" fill="#6a0f6a"/>
<rect x="926.63" y="416.60" width="2.24" height="2.24" rx="0.5" fill="#6a0f6a"/>
<rect x="928.95" y="413.67" width="2.24" height="2.24" rx="0.5" fill="#6a0f6a"/>
<rect x="931.26" y="410.74" width="2.24" height="2.24" rx="0.5" fill="#6a0f6a"/>
<rect x="933.58" y="407.80" width="2.24" height="2.24" rx="0.5" fill="#6a0f6a"/>
<rect x="935.90" y="404.86" width="2.24" height="2.24" rx="0.5" fill="#6a0f6a"/>
<rect x="938.21" y="401.92" width="2.24" height="2.24" rx="0.5" fill="#6a0f6a"/>
<rect x="940.53" y="398.97" width="2.24" height="2.24" rx="0.5" fill="#6a0f6a"/>
<rect x="942.84" y="396.02" width="2.24" height="2.24" rx="0.5" fill="#6a0f6a"/>
<rect x="945.16" y="393.06" width="2.24" height="2.24" rx="0.5" fill="#6a0f6a"/>
<rect x="947.48" y="390.11" width="2.24" height="2.24" rx="0.5" fill="#6a0f6a"/>
<rect x="949.79" y="387.15" width="2.24" height="2.24" rx="0.5" fill="#6a0f6a"/>
<rect x="952.11" y="384.20" width="2.24" height="2.24" rx="0.5" fill="#6a0f6a"/>
<rect x="954.42" y="381.26" width="2.24" height="2.24" rx="0.5" fill="#6a0f6a"/>
<rect x="956.74" y="378.31" width="2.24" height="2.24" rx="0.5" fill="#6a0f6a"/>
<rect x="959.06" y="375.38" width="2.24" height="2.24" rx="0.5" fill="#6a0f6a"/>
<rect x="961.37" y="372.46" width="2.24" height="2.24" rx="0.5" fill="#6a0f6a"/>
<rect x="963.69" y="369.56" width="2.24" height="2.24" rx="0.5" fill="#6a0f6a"/>
<rect x="966.00" y="366.68" width="2.24" height="2.24" rx="0.5" fill="#6a0f6a"/>
<rect x="968.32" y="363.82" width="2.24" height="2.24" rx="0.5" fill="#6a0f6a"/>
<rect x="970.64" y="360.98" width="2.24" height="2.24" rx="0.5" fill="#6a0f6a"/>
<rect x="972.95" y="358.18" width="2.24" height="2.24" rx="0.5" fill="#6a0f6a"/>
<rect x="975.27" y="355.42" width="2.24" height="2.24" rx="0.5" fill="#6a0f6a"/>
<rect x="977.58" y="352.70" width="2.24" height="2.24" rx="0.5" fill="#6a0f6a"/>
<rect x="979.90" y="350.03" width="2.24" height="2.24" rx="0.5" fill="#6a0f6a"/>
<rect x="982.22" y="347.41" width="2.24" height="2.24" rx="0.5" fill="#6a0f6a"/>
<rect x="984.53" y="344.85" width="2.24" height="2.24" rx="0.5" fill="#6a0f6a"/>
<rect x="986.85" y="342.36" width="2.24" height="2.24" rx="0.5" fill="#6a0f6a"/>
<rect x="989.16" y="339.94" width="2.24" height="2.24" rx="0.5" fill="#6a0f6a"/>
<rect x="991.48" y="337.61" width="2.24" height="2.24" rx="0.5" fill="#6a0f6a"/>
</g>
<rect x="732.7" y="41.7" width="268.0999999999999" height="268.5" fill="#fff"/>
<text x="735.00" y="51.60" font-size="7.6" fill="#111" text-anchor="start">S11 Smith Chart</text>
<clipPath id="cs"><circle cx="866.0" cy="175.3" r="121.4"/></clipPath>
<g fill="none" stroke="#b2b2b2" stroke-width="0.62">
<circle cx="866.0" cy="175.3" r="121.0"/>
<line x1="745.0" y1="175.3" x2="987.0" y2="175.3"/>
<circle cx="886.17" cy="175.3" r="100.83"/>
<circle cx="906.33" cy="175.3" r="80.67"/>
<circle cx="926.50" cy="175.3" r="60.50"/>
<circle cx="946.67" cy="175.3" r="40.33"/>
<circle cx="956.75" cy="175.3" r="30.25"/>
<circle cx="966.83" cy="175.3" r="20.17"/>
<g clip-path="url(#cs)">
<circle cx="987.00" cy="-429.70" r="605.00"/>
<circle cx="987.00" cy="780.30" r="605.00"/>
<circle cx="987.00" cy="-66.70" r="242.00"/>
<circle cx="987.00" cy="417.30" r="242.00"/>
<circle cx="987.00" cy="54.30" r="121.00"/>
<circle cx="987.00" cy="296.30" r="121.00"/>
<circle cx="987.00" cy="114.80" r="60.50"/>
<circle cx="987.00" cy="235.80" r="60.50"/>
<circle cx="987.00" cy="151.10" r="24.20"/>
<circle cx="987.00" cy="199.50" r="24.20"/>
</g></g>
<path d="M881.61 175.30 L880.95 176.88 L880.24 178.39 L879.48 179.83 L878.68 181.19 L877.83 182.49 L876.92 183.73 L875.97 184.90 L874.97 186.02 L873.92 187.08 L872.83 188.08 L871.69 189.02 L870.51 189.91 L869.30 190.74 L868.06 191.51 L866.80 192.21 L865.51 192.86 L864.21 193.44 L862.91 193.95 L861.59 194.40 L860.28 194.78 L858.96 195.10 L857.65 195.35 L856.35 195.54 L855.05 195.67 L853.77 195.74 L852.49 195.74 L851.22 195.70 L849.97 195.59 L848.73 195.44 L847.51 195.23 L846.31 194.98 L845.13 194.68 L843.97 194.34 L842.84 193.96 L841.73 193.53 L840.65 193.08 L839.60 192.58 L838.58 192.06 L837.60 191.50 L836.64 190.92 L835.72 190.31 L834.84 189.67 L833.99 189.01 L833.17 188.32 L832.39 187.62 L831.64 186.89 L830.93 186.15 L830.24 185.39 L829.60 184.62 L828.98 183.83 L828.39 183.04 L827.84 182.23 L827.31 181.41 L826.82 180.59 L826.35 179.76 L825.91 178.93 L825.49 178.09 L825.10 177.25 L824.73 176.41 L824.39 175.56 L824.07 174.72 L823.78 173.87 L823.50 173.02 L823.25 172.17 L823.02 171.32 L822.81 170.47 L822.62 169.62 L822.45 168.77 L822.31 167.92 L822.18 167.07 L822.08 166.21 L821.99 165.35 L821.93 164.50 L821.89 163.64 L821.87 162.78 L821.87 161.92 L821.89 161.06 L821.93 160.20 L821.99 159.35 L822.08 158.49 L822.18 157.64 L822.30 156.79 L822.44 155.95 L822.59 155.11 L822.77 154.28 L822.96 153.46 L823.17 152.64 L823.40 151.84 L823.64 151.04 L823.89 150.26 L824.16 149.50 L824.44 148.75 L824.73 148.02 L825.04 147.30 L825.35 146.61 L825.67 145.94 L825.99 145.29 L826.32 144.66 L826.66 144.06 L826.99 143.49" fill="none" stroke="#7a8008" stroke-width="3.2" stroke-linecap="round" stroke-linejoin="round"/>
<circle cx="881.61" cy="175.30" r="1.3" fill="#8a3812"/>
<circle cx="860.28" cy="194.78" r="1.3" fill="#2a2a20"/>
<rect x="438" y="309.8" width="289" height="1.4" fill="#2a2a2a"/>
<rect x="436.75" y="41.75" width="291.2" height="271.9" fill="none" stroke="#e30d0d" stroke-width="3.6"/>
</svg>
<div class="t" style="left:528.0px;top:187.96px;font-size:28.4px;line-height:40px;color:#0a0ad8;-webkit-text-stroke:0;transform-origin:0 0;transform:scaleX(1.091);">7.0MHz:1.296</div>
<div class="t" style="left:528.0px;top:221.36px;font-size:28.4px;line-height:40px;color:#0a0ad8;-webkit-text-stroke:0;transform-origin:0 0;transform:scaleX(1.091);">7.1MHz:1.271</div>
<div class="t" style="left:528.0px;top:255.16px;font-size:28.4px;line-height:40px;color:#0a0ad8;-webkit-text-stroke:0;transform-origin:0 0;transform:scaleX(1.091);">7.2MHz:1.403</div>
<div class="t" style="left:484.6px;top:333.56px;font-size:28.4px;line-height:40px;color:#0a0ad8;-webkit-text-stroke:0;transform-origin:0 0;transform:scaleX(1.062);">1.255@7.07MHz</div>
</div></body></html>
